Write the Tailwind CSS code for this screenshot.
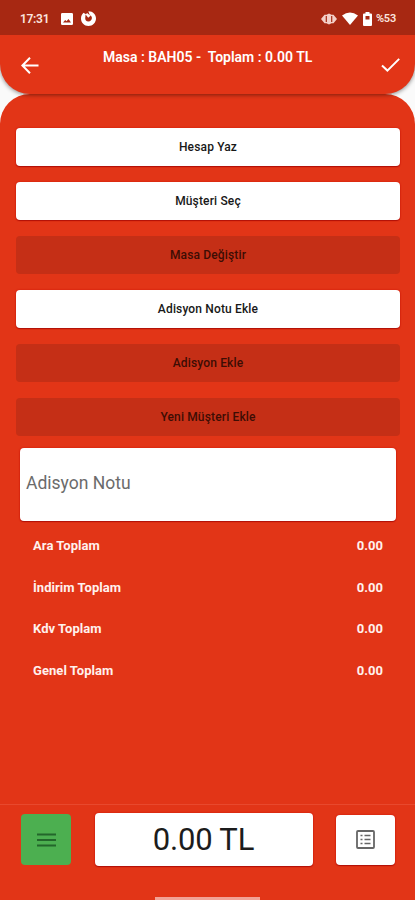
<!DOCTYPE html>
<html lang="tr">
<head>
<meta charset="utf-8">
<title>Masa</title>
<script src="https://cdn.jsdelivr.net/npm/@tailwindcss/browser@4"></script>
</head>
<body class="w-[415px] h-[900px] overflow-hidden bg-[#fafafa] font-['Roboto',sans-serif]">
<div class="flex flex-col h-[900px]">
  <div class="relative z-20 h-[35px] shrink-0 bg-[#a72812] flex items-center text-[#fbe4df] text-[12px] font-semibold pt-[2px] pl-[20px] pr-[19px]">
    <span class="w-[40px] tracking-[-0.3px]">17:31</span>
    <svg class="w-[12px] h-[12px] ml-[1px]" viewBox="0 0 12 12"><path fill="#fff" fill-rule="evenodd" d="M1.3 0h9.4Q12 0 12 1.3v9.4q0 1.3-1.3 1.3H1.3Q0 12 0 10.700V1.300Q0 0 1.300 0zM2 9.500h8L7.500 6 5.500 8.300 4.200 7z"/></svg>
    <svg class="w-[15px] h-[15px] ml-[8px]" viewBox="0 0 15 15"><path fill="#fff" d="M2.500 1.800 5 3.200 7.500 .2C12 .2 15 3.500 15 7.500S11.700 15 7.500 15 0 11.700 0 7.500C0 5 1 3.200 2.500 1.800z"/><path fill="#a72812" d="M4.600 3.500 7.200 6.800 9.200 5 7.200 0 5.500 1.500 8.500 4C10.600 4.800 11 6 10.900 7.300 10.700 9.300 9.300 10.500 7.500 10.500 5.200 10.500 4 8.900 4.200 7z"/></svg>
    <svg class="w-[16px] h-[12px] ml-auto" viewBox="0 0 16 12"><path fill="#f3cfc8" d="M0 6 3.500 1.800 5.500 1.800 8 .5l2.500 1.300h2L16 6l-3.500 4.200h-2L8 11.500 5.500 10.200h-2z"/><path fill="none" stroke="#a72812" stroke-width="1.200" d="M5.300 3v6M10.700 3v6"/></svg>
    <svg class="w-[16px] h-[13px] ml-[5px]" viewBox="0 0 16 13"><path fill="#fff" d="M0 3.400Q8-2.400 16 3.400L8 13z"/></svg>
    <svg class="w-[9px] h-[14px] ml-[5px]" viewBox="0 0 9 14"><path fill="#fff" fill-rule="evenodd" d="M2.500 1.500V0h4v1.500H8q1 0 1 1V13q0 1-1 1H1q-1 0-1-1V2.500q0-1 1-1zM2.500 4v3.500h4V4z"/></svg>
    <span class="text-[11px] leading-[14px] pt-px ml-[4px] tracking-[-0.2px]">%53</span>
  </div>
  <header class="relative z-10 h-[59px] shrink-0 bg-[#e23517] rounded-b-[30px] shadow-[0_1px_4px_rgba(0,0,0,0.45)] flex items-start justify-between text-white">
    <svg class="w-[18px] h-[17px] ml-[21px] mt-[22px]" viewBox="0 0 18 17"><path fill="none" stroke="#fff" stroke-width="2" d="M17.500 8.500H1.500M9 .8 1.400 8.500 9 16.200"/></svg>
    <h1 class="relative left-[-2px] mt-[12px] w-[210px] text-[14px] leading-[20px] font-semibold whitespace-nowrap">Masa : BAH05 -&nbsp; Toplam : 0.00 TL</h1>
    <svg class="w-[19px] h-[14px] mr-[15px] mt-[23px]" viewBox="0 0 19 14"><path fill="none" stroke="#fff" stroke-width="2" d="M1 7.500 6.400 12.600 18.200.9"/></svg>
  </header>
  <main class="flex-1 bg-[#e23517] rounded-t-[30px] flex flex-col">
    <div class="pl-[16px] pr-[15px] pt-[34px] flex flex-col gap-[16px] text-[12px] font-medium tracking-[0.15px] text-[#181818]">
      <button class="h-[38px] rounded-[4px] bg-white shadow-[0_1px_1px_#b01008,0_0_2px_#cc1005]">Hesap Yaz</button>
      <button class="h-[38px] rounded-[4px] bg-white shadow-[0_1px_1px_#b01008,0_0_2px_#cc1005]">Müşteri Seç</button>
      <button class="h-[38px] rounded-[4px] bg-[#c52f16] text-[#3d0d04]">Masa Değiştir</button>
      <button class="h-[38px] rounded-[4px] bg-white shadow-[0_1px_1px_#b01008,0_0_2px_#cc1005]">Adisyon Notu Ekle</button>
      <button class="h-[38px] rounded-[4px] bg-[#c52f16] text-[#3d0d04]">Adisyon Ekle</button>
      <button class="h-[38px] rounded-[4px] bg-[#c52f16] text-[#3d0d04]">Yeni Müşteri Ekle</button>
    </div>
    <div class="ml-[20px] mr-[19px] mt-[12px] h-[73px] rounded-[4px] bg-white shadow-[0_1px_1px_#b01008,0_0_2px_#cc1005] flex items-center pl-[6px] pb-[2px] text-[17.500px] text-[#6b6b6b]">Adisyon Notu</div>
    <dl class="mt-[4px] pl-[33px] pr-[32px] text-[13px] font-bold tracking-[0.05px] text-[#fff1ee]">
      <div class="h-[41.500px] flex items-center justify-between"><dt>Ara Toplam</dt><dd>0.00</dd></div>
      <div class="h-[41.500px] flex items-center justify-between"><dt>İndirim Toplam</dt><dd>0.00</dd></div>
      <div class="h-[41.500px] flex items-center justify-between"><dt>Kdv Toplam</dt><dd>0.00</dd></div>
      <div class="h-[41.500px] flex items-center justify-between"><dt>Genel Toplam</dt><dd>0.00</dd></div>
    </dl>
    <footer class="mt-auto h-[96px] border-t border-[#e8492e] flex flex-col">
      <div class="h-[69px] pl-[21px] pr-[20px] flex items-center justify-between">
        <button class="w-[50px] h-[51px] rounded-[4px] bg-[#4caf50] flex items-center justify-center"><svg class="w-[19px] h-[14px]" viewBox="0 0 19 14"><path stroke="#23662b" stroke-width="2" d="M0 1.500h19M0 7h19M0 12.500h19"/></svg></button>
        <div class="w-[218px] h-[53px] rounded-[4px] bg-white shadow-[0_1px_1px_#b01008,0_0_2px_#cc1005] flex items-center justify-center pt-[2px] text-[31px] tracking-[-0.2px] text-[#1c1c1c]">0.00 TL</div>
        <button class="w-[59px] h-[50px] rounded-[4px] bg-white shadow-[0_1px_1px_#b01008,0_0_2px_#cc1005] flex items-center justify-center"><svg class="w-[19px] h-[19px]" viewBox="0 0 19 19" fill="none" stroke="#666"><rect x="1" y="1" width="17" height="17" rx="1" stroke-width="1.800"/><path stroke-width="1.500" d="M4.500 5.500h2M4.500 9.500h2M4.500 13.500h2M8.500 5.500h6M8.500 9.500h6M8.500 13.500h6"/></svg></button>
      </div>
      <div class="mt-auto mx-auto w-[105px] h-[3px] bg-[#f2a296]"></div>
    </footer>
  </main>
</div>
</body>
</html>
